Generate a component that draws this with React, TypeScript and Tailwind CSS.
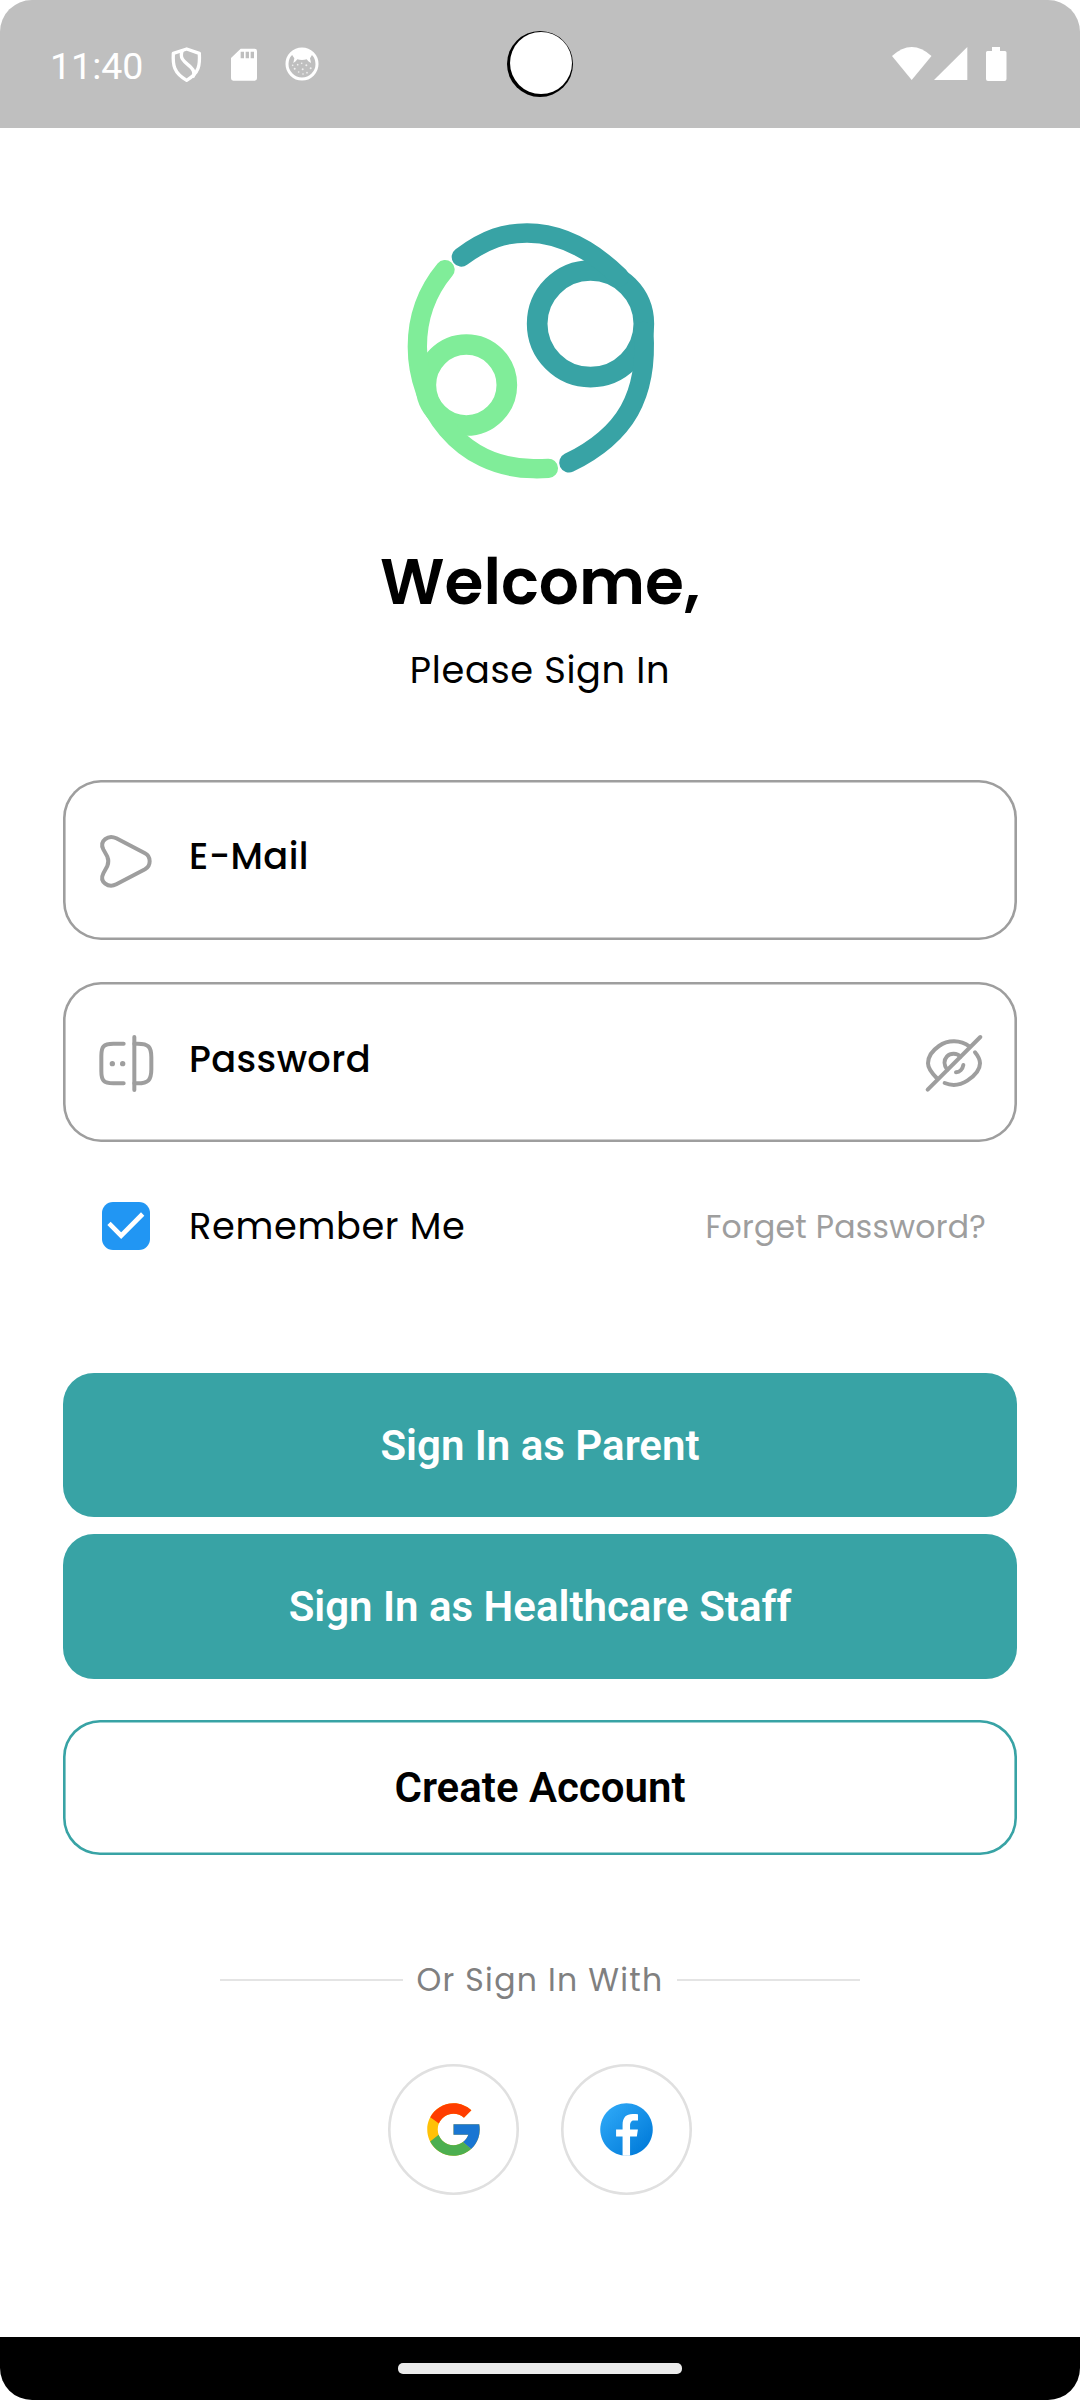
import type { ReactNode } from "react";
import { FcGoogle } from "react-icons/fc";

function StatusBar() {
  return (
    <header className="relative flex h-[128px] items-center justify-between bg-[#bfbfbf] text-white">
      <div className="flex items-center">
        <span className="ml-[50px] mt-[3px] w-[120px] font-[Roboto] text-[37.5px] leading-[48px]">11:40</span>
        <svg className="h-[37px] w-[33px]" viewBox="510 140 99 111" fill="none" stroke="white" strokeWidth="10" strokeLinejoin="round">
          <path d="M560 149 L598 162 C600 197 598 221 560 243 C521 221 518 197 520 162 Z" />
          <path d="M547 153 C536 180 558 190 571 202 C584 214 585 224 578 234" />
        </svg>
        <svg className="ml-[28px] h-[33px] w-[26px]" viewBox="693 145 78 99" fill="white">
          <path
            fillRule="evenodd"
            d="M722 147 H764 Q771 147 771 154 V236 Q771 243 764 243 H700 Q693 243 693 236 V175 Z M722 156 V176 H732 V156 Z M737 156 V176 H747 V156 Z M752 156 V176 H762 V156 Z"
          />
        </svg>
        <svg className="ml-[28px] h-[34px] w-[34px]" viewBox="855 144 102 102" fill="none">
          <circle cx="906" cy="195" r="45" stroke="white" strokeWidth="9" />
          <path d="M873 163 Q906 137 939 163 L930 178 L933 192 L925 187 L920 181 Q906 185 892 181 L887 187 L880 192 L883 178 Z" fill="white" />
          <g fill="white" fillOpacity=".75">
            <circle cx="878" cy="199" r="2.5" />
            <circle cx="884" cy="209" r="3" />
            <circle cx="893" cy="197" r="2.5" />
            <circle cx="905" cy="193" r="2.5" />
            <circle cx="908" cy="211" r="3" />
            <circle cx="896" cy="219" r="2.5" />
            <circle cx="919" cy="199" r="3" />
            <circle cx="932" cy="208" r="3" />
            <circle cx="921" cy="221" r="2.5" />
            <circle cx="909" cy="225" r="2.5" />
          </g>
        </svg>
      </div>
      <div className="mr-[73px] flex items-center">
        <svg className="h-[34px] w-[40px]" viewBox="892 47 40 34" fill="white">
          <path d="M892 56 Q911.7 38 931.5 56 L911.7 80 Z" />
        </svg>
        <svg className="ml-[2px] h-[34px] w-[34px]" viewBox="934 47 34 34" fill="white">
          <path d="M934 80 H967.3 V47 Z" />
        </svg>
        <svg className="ml-[18px] h-[34px] w-[21px]" viewBox="986 47 21 34" fill="white">
          <path d="M992 47 H1000 V51 H1005 Q1006.5 51 1006.5 52.5 V79 Q1006.5 81 1004.5 81 H988 Q986 81 986 79 V52.5 Q986 51 987.5 51 H992 Z" />
        </svg>
      </div>
      <div className="absolute left-[507px] top-[31px] h-[66px] w-[66px] rounded-full bg-black">
        <div className="ml-[2.5px] mt-[1px] h-[62px] w-[62.5px] rounded-full bg-white" />
      </div>
    </header>
  );
}

function Logo() {
  return (
    <svg className="h-[290px] w-[300px]" viewBox="0 0 900 870" fill="none" strokeLinecap="round">
      <g stroke="#80ed99">
        <circle cx="229" cy="540" r="121.5" strokeWidth="62" />
        <path d="M165 194 C110 260 82 340 82 425 C82 600 206 788 430 791 Q450 791.500 475 790" strokeWidth="58" />
      </g>
      <g stroke="#38a3a5">
        <circle cx="601.5" cy="356.500" r="160" strokeWidth="62" />
        <path d="M214 156 C290 100 345 84 411 84 C505 84 600 130 688 215" strokeWidth="58" />
        <path d="M761 380 C774 570 708 690 537 773" strokeWidth="59" />
      </g>
    </svg>
  );
}

const iconProps = {
  className: "mt-[3px] size-[63px] shrink-0",
  fill: "none",
  stroke: "#9e9e9e",
  strokeWidth: 12,
  strokeLinecap: "round",
  strokeLinejoin: "round",
} as const;

function SendIcon() {
  return (
    <svg {...iconProps} viewBox="132 180 189 189">
      <path d="M199 205 L285 250 Q299 257 299 274 Q299 290 285 298 L199 343 C175 355 147 336 160 310 L172 288 Q178 274 172 260 L160 238 C147 212 175 193 199 205 Z" />
    </svg>
  );
}

function PasswordIcon() {
  return (
    <svg {...iconProps} viewBox="132 786 189 189">
      <path d="M221 821 H190 C160 821 154 830 154 858 V903 C154 931 160 940 190 940 H221" />
      <path d="M253 821 H263 C295 821 304 830 304 862 V898 C304 930 295 940 263 940 H253" />
      <path d="M253 801 V960" />
      <circle cx="187" cy="881" r="8" fill="#9e9e9e" stroke="none" />
      <circle cx="218" cy="881" r="8" fill="#9e9e9e" stroke="none" />
    </svg>
  );
}

function EyeSlashIcon() {
  return (
    <svg {...iconProps} viewBox="729 217 189 189">
      <path d="M869 261 C841 240 804 240 777 259 C758 272 744 292 744 311 C744 328 756 341 770 355" />
      <path d="M885 278 C895 290 900 298 900 311 C900 332 879 352 862 363 C840 377 815 379 794 370" />
      <path d="M841 291 C831 280 812 279 801 290 C791 301 791 316 802 330" />
      <path d="M850 316 C848 328 839 337 828 338" />
      <path d="M743 390 L901 232" />
    </svg>
  );
}

function Field({ icon, children, trailing }: { icon: ReactNode; children: ReactNode; trailing?: ReactNode }) {
  return (
    <div className="flex h-[160px] items-center rounded-[38px] px-[31px] shadow-[inset_0_0_0_2.6px_#9e9e9e]">
      {icon}
      {children}
      <div className="ml-auto">{trailing}</div>
    </div>
  );
}

function FacebookIcon() {
  return (
    <svg className="size-[63px]" viewBox="0 0 48 48">
      <defs>
        <linearGradient id="fb" x1="9.993" x2="40.615" y1="9.993" y2="40.615" gradientUnits="userSpaceOnUse">
          <stop offset="0" stopColor="#2aa4f4" />
          <stop offset="1" stopColor="#007ad9" />
        </linearGradient>
      </defs>
      <path fill="url(#fb)" d="M24,4C12.954,4,4,12.954,4,24s8.954,20,20,20s20-8.954,20-20S35.046,4,24,4z" />
      <path
        fill="#fff"
        d="M26.707,29.301h5.176l0.813-5.258h-5.989v-2.874c0-2.184,0.714-4.121,2.757-4.121h3.283V12.46c-0.577-0.078-1.797-0.248-4.102-0.248c-4.814,0-7.636,2.542-7.636,8.334v3.498H16.06v5.258h4.948v14.452C21.988,43.9,22.981,44,24,44c0.921,0,1.82-0.084,2.707-0.204V29.301z"
      />
    </svg>
  );
}

function SocialButton({ label, children }: { label: string; children: ReactNode }) {
  return (
    <button aria-label={label} className="flex size-[131px] items-center justify-center rounded-full shadow-[inset_0_0_0_2.6px_#e0e0e0]">
      {children}
    </button>
  );
}

export default function App() {
  return (
    <div className="bg-white">
      <div className="flex h-[2400px] w-[1080px] flex-col overflow-hidden rounded-[32px] bg-white font-[Poppins,Inter,sans-serif] text-black [font-feature-settings:'cv11']">
        <StatusBar />
        <main className="flex flex-1 flex-col px-[63px] pt-[77px]">
          <div className="flex flex-col items-center">
            <Logo />
            <h1 className="mt-[47px] text-[63px] font-semibold leading-[81px]">Welcome,</h1>
            <p className="mt-[19px] text-[36.75px] leading-[56px] tracking-[0.66px]">Please Sign In</p>
          </div>

          <div className="mt-[82px] flex flex-col gap-[42px]">
            <Field icon={<SendIcon />}>
              <span className="ml-[32px] pb-[8px] text-[36.75px] font-medium leading-[48px] tracking-[0.4px]">E-Mail</span>
            </Field>
            <Field icon={<PasswordIcon />} trailing={<EyeSlashIcon />}>
              <span className="ml-[32px] pb-[7px] text-[36.75px] font-medium leading-[48px] tracking-[0.4px]">Password</span>
            </Field>
          </div>

          <div className="mt-[60px] flex h-[48px] items-center pl-[39px] pr-[31px]">
            <svg className="size-[48px] rounded-[11px] bg-[#2196f3]" viewBox="156 126 144 144" fill="none" stroke="white" strokeWidth="14">
              <path d="M177 190 L213.500 227 L278 162" />
            </svg>
            <span className="ml-[39px] text-[36.75px] leading-[48px] tracking-[0.66px]">Remember Me</span>
            <a className="ml-auto mt-[2px] text-[31.5px] leading-[48px] tracking-[0.26px] text-[#9e9e9e]">Forget Password?</a>
          </div>

          <div className="mt-[123px] flex flex-col font-[Roboto] text-[42px] font-semibold">
            <button className="h-[144px] rounded-[31px] bg-[#38a3a5] text-white">Sign In as Parent</button>
            <button className="mt-[17px] h-[145px] rounded-[31px] bg-[#38a3a5] text-white">Sign In as Healthcare Staff</button>
            <button className="mt-[41px] h-[135px] rounded-[37px] shadow-[inset_0_0_0_2.6px_#38a3a5]">Create Account</button>
          </div>

          <div className="mt-[101px] flex items-center px-[157px]">
            <div className="h-[2px] flex-1 bg-[#e4e4e4]" />
            <span className="px-[13px] text-[31.5px] leading-[48px] tracking-[1.31px] text-[#808080]">Or Sign In With</span>
            <div className="h-[2px] flex-1 bg-[#e4e4e4]" />
          </div>

          <div className="mt-[60px] flex justify-center gap-[42px]">
            <SocialButton label="Google">
              <FcGoogle className="size-[63px]" />
            </SocialButton>
            <SocialButton label="Facebook">
              <FacebookIcon />
            </SocialButton>
          </div>
        </main>
        <footer className="flex h-[63px] justify-center bg-black pt-[26px]">
          <div className="h-[11px] w-[284px] rounded-[5px] bg-[#ebebeb]" />
        </footer>
      </div>
    </div>
  );
}
